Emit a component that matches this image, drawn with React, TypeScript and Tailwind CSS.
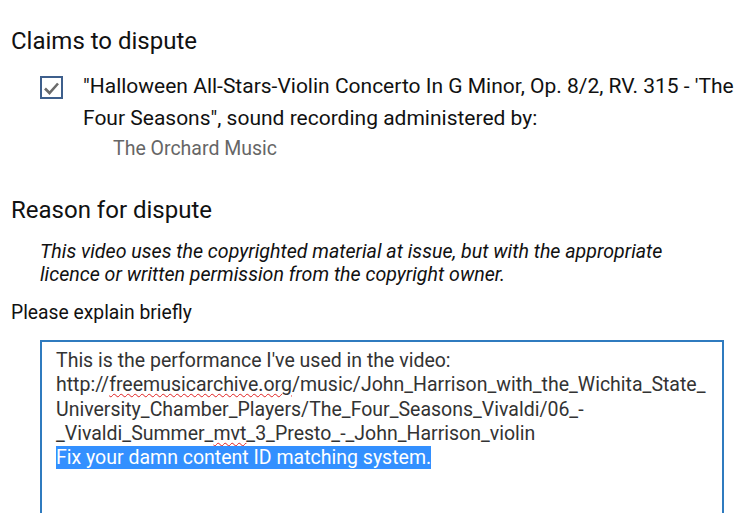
import React from "react";

export default function App() {
  const font = { fontFamily: "Roboto, 'Noto Sans', sans-serif" };
  return (
    <div className="w-[737px] h-[513px] overflow-hidden bg-white text-[#111]" style={font}>
      <div className="pt-[26px] pl-[11px]">
        <h2 className="text-[24px] leading-[30px] text-[#111]">Claims to dispute</h2>
        <div className="flex mt-[14px] pl-[29px]">
          <div className="w-[23px] h-[23px] border-2 border-[#3e5f8c] flex items-center justify-center mt-[6px] shrink-0 bg-white">
            <svg width="17" height="14" viewBox="0 0 17 14">
              <path d="M2 7.5 L6.5 12 L15 2.5" fill="none" stroke="#6b6b6b" strokeWidth="2.6" />
            </svg>
          </div>
          <div className="ml-[20px]">
            <p className="text-[21px] leading-[32px] text-[#111] w-[680px] whitespace-nowrap">
              "Halloween All-Stars-Violin Concerto In G Minor, Op. 8/2, RV. 315 - 'The
              <br />
              Four Seasons", sound recording administered by:
            </p>
            <p className="text-[19.5px] leading-[30px] text-[#666] pl-[30px]">The Orchard Music</p>
          </div>
        </div>
        <h2 className="text-[24px] leading-[30px] text-[#111] mt-[31px]">Reason for dispute</h2>
        <p className="italic text-[19.6px] leading-[23px] text-[#111] pl-[29px] mt-[15px] whitespace-nowrap">
          This video uses the copyrighted material at issue, but with the appropriate
          <br />
          licence or written permission from the copyright owner.
        </p>
        <p className="text-[19.3px] leading-[24px] text-[#111] mt-[15px]">Please explain briefly</p>
        <div className="ml-[29px] mt-[15px] w-[684px] h-[200px] border-2 border-[#2f7bbf] pl-[14px] pt-[7px] text-[19.5px] leading-[24.25px] text-[#333] whitespace-nowrap">
          This is the performance I've used in the video:
          <br />
          http://
          <span className="underline decoration-wavy decoration-[#e02020] decoration-1 underline-offset-2">freemusicarchive.org</span>
          /music/John_Harrison_with_the_Wichita_State_
          <br />
          University_Chamber_Players/The_Four_Seasons_Vivaldi/06_-
          <br />
          _Vivaldi_Summer_
          <span className="underline decoration-wavy decoration-[#e02020] decoration-1 underline-offset-2">mvt</span>
          _3_Presto_-_John_Harrison_violin
          <br />
          <span className="bg-[#3390ff] text-white">Fix your damn content ID matching system.</span>
        </div>
      </div>
    </div>
  );
}
